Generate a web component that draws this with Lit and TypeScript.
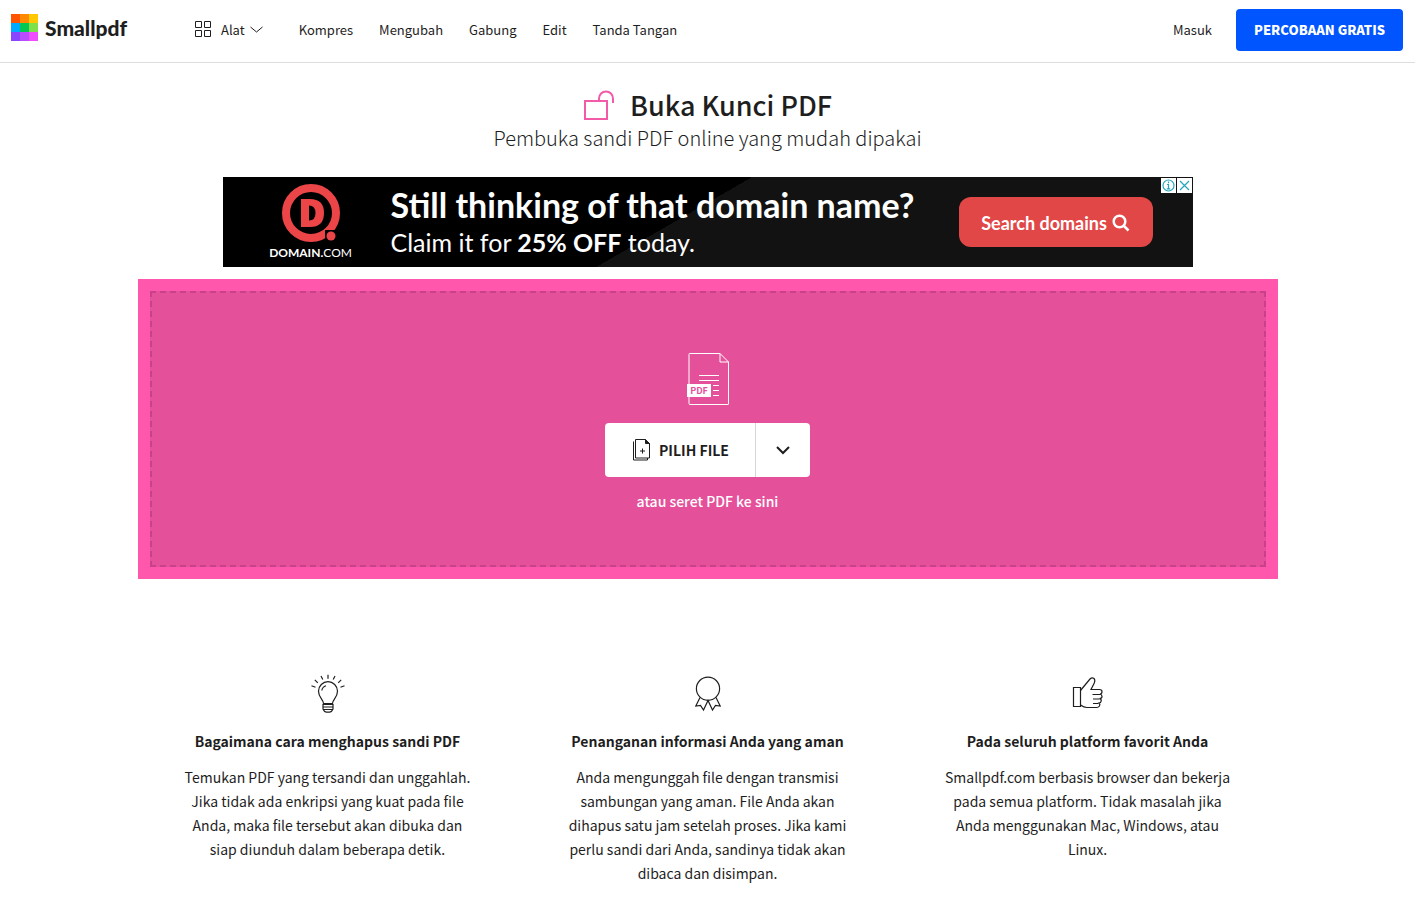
import { LitElement, html, css, svg } from "lit";
import { customElement } from "lit/decorators.js";

const LOGO_COLORS = [
  "#ff5500", "#ff8a00", "#ffc800",
  "#00aaff", "#00c853", "#7ee04a",
  "#8a46ff", "#b84dff", "#f04dff",
];

const NAV_LINKS = ["Kompres", "Mengubah", "Gabung", "Edit", "Tanda Tangan"];

const bulbIcon = html`<svg class="feature-icon" width="38" height="40" viewBox="0 0 38 40" aria-hidden="true">
  <path d="M14.500 29.500c0-4-5-6-5-12.300a9.500 9.500 0 0 1 19 0c0 6.300-5 8.300-5 12.300z" />
  <path d="M12.800 16.500a6 6 0 0 1 4.200-4.800" />
  <path d="M13.500 30.500h11M13.500 33h11M14 35.500h10M14 30v5q1.500 3.200 3.500 3.200h3q2 0 3.500-3.200v-5" />
  <path d="M19 .8v4M12 2l1.800 3.500M26 2l-1.800 3.500M5.800 5.800l3 3M32.200 5.800l-3 3M2.500 11.800l4 1.400M35.500 11.800l-4 1.400" />
</svg>`;

const ribbonIcon = html`<svg class="feature-icon" width="38" height="40" viewBox="0 0 38 40" aria-hidden="true">
  <circle cx="19" cy="14.700" r="11.600" />
  <path d="M11 23.500L6.800 32l4.700-.5 3 4.500L19 26.500l4.500 9.500 3-4.500 4.700.5L27 23.500" />
</svg>`;

const thumbIcon = html`<svg class="feature-icon" width="38" height="40" viewBox="0 0 38 40" aria-hidden="true">
  <path d="M4.500 13.500h7v19h-7z" />
  <path d="M11.500 16.500L21 5q2-2 4-.5 1.500 1.500.3 4.500L22 15.500h8.500q2.500 0 2.500 2.200t-2 2.300q2 .5 2 2.500t-2.500 2q2 .5 1.700 2.500t-2.200 2q1.500 1.500.5 3-1 1.500-3 1.500H18q-3 0-6.500-2.500" />
  <path d="M23.500 20.500h7.500M24 25h6.500M24 29.500h5.500" />
</svg>`;

const FEATURES = [
  {
    icon: bulbIcon,
    title: "Bagaimana cara menghapus sandi PDF",
    text: "Temukan PDF yang tersandi dan unggahlah. Jika tidak ada enkripsi yang kuat pada file Anda, maka file tersebut akan dibuka dan siap diunduh dalam beberapa detik.",
  },
  {
    icon: ribbonIcon,
    title: "Penanganan informasi Anda yang aman",
    text: "Anda mengunggah file dengan transmisi sambungan yang aman. File Anda akan dihapus satu jam setelah proses. Jika kami perlu sandi dari Anda, sandinya tidak akan dibaca dan disimpan.",
  },
  {
    icon: thumbIcon,
    title: "Pada seluruh platform favorit Anda",
    text: "Smallpdf.com berbasis browser dan bekerja pada semua platform. Tidak masalah jika Anda menggunakan Mac, Windows, atau Linux.",
  },
];

@customElement("site-header")
export class SiteHeader extends LitElement {
  static styles = css`
    :host { display: block; }
    * { box-sizing: border-box; }
    .bar {
      display: flex;
      align-items: center;
      height: 63px;
      padding: 0 12px 3px 11px;
      border-bottom: 1px solid #ddd;
      font-size: 13px;
      line-height: 20px;
    }
    a { color: inherit; text-decoration: none; }
    .logo {
      display: flex;
      align-items: center;
      gap: 7px;
      min-width: 120px;
      margin: 0 64px 4px 0;
      font: 900 21px/26px "Lato Black", Lato, sans-serif;
    }
    .tools {
      display: flex;
      align-items: center;
      padding: 0;
      border: 0;
      background: none;
      color: inherit;
      font: inherit;
      cursor: pointer;
    }
    .tools .grid { margin-right: 9px; }
    .tools .chevron { margin-left: 5px; }
    .tools svg { fill: none; stroke: currentColor; }
    nav { display: flex; gap: 26px; margin-left: 36px; flex: 1; }
    .account { display: flex; align-items: center; gap: 24px; }
    .trial {
      padding: 11px 18px;
      border-radius: 4px;
      background: #0055ff;
      color: #fff;
      font-weight: 900;
    }
  `;

  render() {
    return html`<header class="bar">
      <a class="logo" href="#">
        <svg width="27" height="27" viewBox="0 0 27 27" aria-hidden="true">
          ${LOGO_COLORS.map((c, i) => svg`<rect x=${(i % 3) * 9} y=${Math.floor(i / 3) * 9} width="9" height="9" fill=${c} />`)}
        </svg>
        <span>Smallpdf</span>
      </a>
      <button class="tools" type="button">
        <svg class="grid" width="17" height="17" viewBox="0 0 17 17" aria-hidden="true">
          <path d="M.5.5h6v6h-6zM9.500.5h6v6h-6zM.5 9.500h6v6h-6zM9.500 9.500h6v6h-6z" />
        </svg>
        Alat
        <svg class="chevron" width="13" height="8" viewBox="0 0 13 8" aria-hidden="true"><path d="M.5 1l6 5 6-5" /></svg>
      </button>
      <nav>${NAV_LINKS.map((l) => html`<a href="#">${l}</a>`)}</nav>
      <div class="account">
        <a href="#">Masuk</a>
        <a class="trial" href="#">PERCOBAAN GRATIS</a>
      </div>
    </header>`;
  }
}

@customElement("ad-banner")
export class AdBanner extends LitElement {
  static styles = css`
    :host { display: block; width: 100%; max-width: 970px; }
    * { box-sizing: border-box; }
    .ad {
      position: relative;
      display: flex;
      align-items: center;
      height: 90px;
      padding: 0 40px 0 47px;
      background: linear-gradient(150deg, #000 0 47%, #121212 47%);
      color: #fff;
      font-family: Lato, sans-serif;
    }
    .brand { display: flex; flex-direction: column; align-items: center; gap: 2px; width: 82px; margin-right: 39px; }
    .brand-name { font-size: 12px; line-height: 14px; white-space: nowrap; }
    .copy { flex: 1; white-space: nowrap; }
    .headline { margin: 0; font-size: 34px; line-height: 40px; font-weight: 700; }
    .offer { margin: 0; font-size: 25px; line-height: 34px; }
    .search {
      display: flex;
      align-items: center;
      justify-content: center;
      gap: 5px;
      width: 194px;
      height: 50px;
      padding: 2px 0 0;
      border-radius: 12px;
      background: #e24747;
      color: #fff;
      font-size: 18px;
      font-weight: 700;
      text-decoration: none;
    }
    .search svg { fill: none; stroke: currentColor; stroke-width: 2.500; }
    .controls { position: absolute; top: 1px; right: 1px; display: flex; gap: 1px; }
    .controls button { width: 15px; height: 15px; padding: 0; border: 0; background: #fff; line-height: 0; }
    .controls svg { fill: none; stroke: #23a6bd; stroke-width: 1.200; }
  `;

  render() {
    return html`<aside class="ad">
      <div class="brand">
        <svg width="60" height="60" viewBox="0 0 60 60" aria-hidden="true">
          <circle cx="30" cy="29" r="25" fill="none" stroke="#eb4547" stroke-width="8" />
          <path fill="#eb4547" fill-rule="evenodd" d="M20 15h9q14 0 14 14t-14 14h-9zM28 21.500v15q6.500 0 6.500-7.500t-6.500-7.500z" />
          <path fill="#000" d="M44 46h16v14H44z" />
          <circle cx="50" cy="52" r="4.500" fill="#eb4547" />
        </svg>
        <span class="brand-name"><b>DOMAIN.</b>COM</span>
      </div>
      <div class="copy">
        <p class="headline">Still thinking of that domain name?</p>
        <p class="offer">Claim it for <b>25% OFF</b> today.</p>
      </div>
      <a class="search" href="#">
        Search domains
        <svg width="18" height="18" viewBox="0 0 18 18" aria-hidden="true"><circle cx="7.500" cy="7.500" r="5.800" /><path d="M11.500 11.500l5 5" /></svg>
      </a>
      <div class="controls">
        <button type="button" aria-label="Info">
          <svg width="15" height="15" viewBox="0 0 15 15"><circle cx="7.500" cy="7.500" r="5.500" /><path d="M7.500 3.500v1.800M6 6.500h1.500v4M5.800 10.800h3.400" /></svg>
        </button>
        <button type="button" aria-label="Close">
          <svg width="15" height="15" viewBox="0 0 15 15"><path d="M3 3l9 9M12 3l-9 9" /></svg>
        </button>
      </div>
    </aside>`;
  }
}

@customElement("drop-zone")
export class DropZone extends LitElement {
  static styles = css`
    :host { display: block; width: 100%; }
    * { box-sizing: border-box; }
    .zone { padding: 12px; background: #ff57ac; }
    .inner {
      display: flex;
      flex-direction: column;
      align-items: center;
      padding: 59px 0 53px;
      border: 2px dashed #c8418a;
      background: #e5509b;
    }
    .doc { margin-bottom: 15px; }
    .picker {
      display: flex;
      height: 54px;
      margin-bottom: 13px;
      border-radius: 4px;
      background: #fff;
      overflow: hidden;
    }
    button {
      display: flex;
      align-items: center;
      justify-content: center;
      padding: 0;
      border: 0;
      background: none;
      color: #1e1e1e;
      font: inherit;
      cursor: pointer;
    }
    .choose { gap: 8px; padding: 0 26px 0 28px; font-size: 14px; font-weight: 700; }
    .more { width: 55px; border-left: 1px solid #d5d5d5; }
    .hint { margin: 0; color: #fff; font-size: 14px; line-height: 22px; font-weight: 500; }
    .pdf-label { font-size: 9px; }
  `;

  render() {
    return html`<section class="zone">
      <div class="inner">
        <svg class="doc" width="44" height="56" viewBox="0 0 44 56" aria-hidden="true">
          <path d="M3.500 1.500h30.500l8.500 8.500v42q0 .5-.5.5h-38q-1 0-1-1v-49q0-1 .5-1zM34 1.500v8.500h8.500M13 23.500h20M13 28.500h20M27 33.500h6M27 38.500h6M27 43.500h6" fill="none" stroke="#fff" />
          <path d="M1 32h24v13H1z" fill="#fff" />
          <text class="pdf-label" x="13" y="42" text-anchor="middle" fill="#e5509b" font-weight="700">PDF</text>
        </svg>
        <div class="picker">
          <button class="choose" type="button">
            <svg width="18" height="22" viewBox="0 0 18 22" aria-hidden="true" fill="none" stroke="currentColor">
              <path d="M2.500.5h10l4 4v14.500h-14zM.5 2.500v18.500h14v-2M9.500 9.500v5M7 12h5" /><path d="M12.500.5v4h4z" fill="currentColor" />
            </svg>
            PILIH FILE
          </button>
          <button class="more" type="button" aria-label="Opsi lain">
            <svg width="14" height="9" viewBox="0 0 14 9" aria-hidden="true" fill="none" stroke="currentColor" stroke-width="2"><path d="M1 1l6 6 6-6" /></svg>
          </button>
        </div>
        <p class="hint">atau seret PDF ke sini</p>
      </div>
    </section>`;
  }
}

@customElement("app-root")
export class AppRoot extends LitElement {
  static styles = css`
    :host {
      display: block;
      background: #fff;
      color: #1e1e1e;
      font-family: "Noto Sans CJK SC", "Noto Sans", sans-serif;
    }
    * { box-sizing: border-box; }
    main {
      display: flex;
      flex-direction: column;
      align-items: center;
      max-width: 1140px;
      margin: 0 auto;
      padding-top: 24px;
    }
    .title { display: flex; align-items: center; gap: 15px; }
    h1 { margin: 0; font-size: 27px; line-height: 36px; font-weight: 500; }
    .title svg { fill: none; stroke: #f25ba8; stroke-width: 2; }
    .subtitle { margin: 0 0 24px; font-size: 20px; line-height: 30px; font-weight: 300; }
    ad-banner { margin-bottom: 12px; }
    .features {
      display: grid;
      grid-template-columns: repeat(3, 1fr);
      width: 100%;
      padding: 95px 0 24px;
    }
    .feature { display: flex; flex-direction: column; align-items: center; padding: 0 42px; text-align: center; }
    .feature-icon { fill: none; stroke: #1e1e1e; stroke-width: 1.200; }
    h2 { margin: 15px 0 12px; font-size: 14px; line-height: 24px; font-weight: 700; white-space: nowrap; }
    .text { margin: 0; font-size: 14px; line-height: 24px; }
  `;

  render() {
    return html`
      <site-header></site-header>
      <main>
        <div class="title">
          <svg width="32" height="32" viewBox="0 0 32 32" aria-hidden="true"><path d="M2 12h22v18H2zM16 12V9.500a7 7 0 0 1 14 0V14" /></svg>
          <h1>Buka Kunci PDF</h1>
        </div>
        <p class="subtitle">Pembuka sandi PDF online yang mudah dipakai</p>
        <ad-banner></ad-banner>
        <drop-zone></drop-zone>
        <section class="features">
          ${FEATURES.map((f) => html`<article class="feature">
            ${f.icon}
            <h2>${f.title}</h2>
            <p class="text">${f.text}</p>
          </article>`)}
        </section>
      </main>
    `;
  }
}
